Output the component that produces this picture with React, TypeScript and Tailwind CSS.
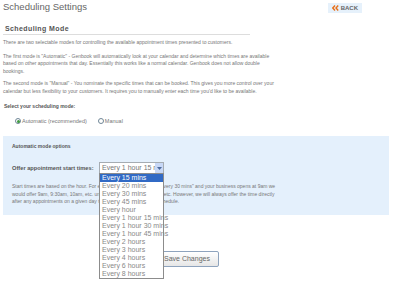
import React from "react";

const times = [
  "Every 15 mins",
  "Every 20 mins",
  "Every 30 mins",
  "Every 45 mins",
  "Every hour",
  "Every 1 hour 15 mins",
  "Every 1 hour 30 mins",
  "Every 1 hour 45 mins",
  "Every 2 hours",
  "Every 3 hours",
  "Every 4 hours",
  "Every 6 hours",
  "Every 8 hours",
];

function Radio({ checked }: { checked?: boolean }) {
  return (
    <span className="w-[6px] h-[6px] rounded-full border border-[#6f8696] bg-white flex items-center justify-center shrink-0">
      {checked && <span className="w-[3px] h-[3px] rounded-full bg-[#3f9a3f]" />}
    </span>
  );
}

export default function App() {
  return (
    <div className="w-[400px] h-[283px] overflow-hidden bg-white text-[#777] font-['Liberation_Sans',Arial,sans-serif] pl-[3px] pr-[11px]">
      {/* Header */}
      <div className="flex items-start justify-between pt-[1px]">
        <h1 className="text-[9.5px] leading-[12px] text-[#666]">Scheduling Settings</h1>
        <button className="mt-[2px] mr-[27px] flex items-center gap-[2px] bg-[#e6f1fb] px-[4px] h-[10px] text-[6px] font-bold text-[#666]">
          <svg width="7" height="6" viewBox="0 0 7 6" fill="none" stroke="#e8701a" strokeWidth="1.4">
            <path d="M3 0.5L0.8 3L3 5.5M6.2 0.5L4 3L6.2 5.5" />
          </svg>
          BACK
        </button>
      </div>

      {/* Scheduling mode */}
      <h2 className="mt-[12px] w-[247px] border-b border-[#ddd] pb-[1px] pl-[2px] text-[7px] leading-[8px] font-bold tracking-[0.4px] text-[#555]">
        Scheduling Mode
      </h2>

      <div className="text-[5px] leading-[7.5px] whitespace-nowrap">
        <p className="mt-[4px]">There are two selectable modes for controlling the available appointment times presented to customers.</p>
        <p className="mt-[6px]">
          The first mode is "Automatic" - Genbook will automatically look at your calendar and determine which times are available
          <br />
          based on other appointments that day. Essentially this works like a normal calendar. Genbook does not allow double
          <br />
          bookings.
        </p>
        <p className="mt-[5px]">
          The second mode is "Manual" - You nominate the specific times that can be booked. This gives you more control over your
          <br />
          calendar but less flexibility to your customers. It requires you to manually enter each time you'd like to be available.
        </p>
      </div>

      <p className="mt-[7px] pl-[1px] text-[5px] leading-[8px] font-bold text-[#555]">Select your scheduling mode:</p>

      <div className="mt-[7px] pl-[12px] flex items-center h-[8px] text-[5.5px] gap-[1px]">
        <label className="flex items-center gap-[1px]">
          <Radio checked />
          Automatic (recommended)
        </label>
        <label className="ml-[10px] flex items-center gap-[1px]">
          <Radio />
          Manual
        </label>
      </div>

      {/* Automatic mode options */}
      <div className="mt-[11px] bg-[#e4f0fc] px-[9px] pt-[6px] pb-[9px]">
        <h3 className="text-[5px] leading-[8px] font-bold text-[#555]">Automatic mode options</h3>
        <div className="mt-[12px] flex items-center h-[12px]">
          <span className="w-[87px] text-[5.7px] font-bold text-[#555] whitespace-nowrap">Offer appointment start times:</span>
          <div className="relative">
            <div className="w-[65px] h-[12px] border border-[#a5acb2] bg-white flex items-center overflow-hidden">
              <span className="flex-1 pl-[2px] text-[7px] text-[#777] whitespace-nowrap overflow-hidden">Every 1 hour 15 m</span>
              <span className="w-[8px] h-[10px] bg-[#c8d8f6] flex items-center justify-center shrink-0">
                <svg width="5" height="3" viewBox="0 0 5 3">
                  <path d="M0 0L5 0L2.5 3Z" fill="#4d6a9c" />
                </svg>
              </span>
            </div>
            <ul className="absolute left-0 top-[11px] w-[65px] border border-[#8c8c8c] bg-white z-10">
              {times.map((t, i) => (
                <li
                  key={t}
                  className={
                    i === 0
                      ? "h-[8px] leading-[8px] pl-[2px] text-[7px] bg-[#316ac5] text-white whitespace-nowrap"
                      : "h-[8px] leading-[8px] pl-[2px] text-[7px] text-[#888] whitespace-nowrap"
                  }
                >
                  {t}
                </li>
              ))}
            </ul>
          </div>
        </div>
        <p className="mt-[9px] text-[5px] leading-[7.5px] whitespace-nowrap">
          Start times are based on the hour. For example, if you choose the "Every 30 mins" and your business opens at 9am we
          <br />
          would offer 9am, 9:30am, 10am, etc. until your business day closes, etc. However, we will always offer the time directly
          <br />
          after any appointments on a given day to help fill the gaps in your schedule.
        </p>
      </div>

      <div className="mt-[29px] pl-[152px]">
        <button className="h-[16px] px-[8px] border border-[#8ea3bd] rounded-[2px] bg-gradient-to-b from-white to-[#e6e6e6] text-[7px] text-[#666]">
          Save Changes
        </button>
      </div>
    </div>
  );
}
